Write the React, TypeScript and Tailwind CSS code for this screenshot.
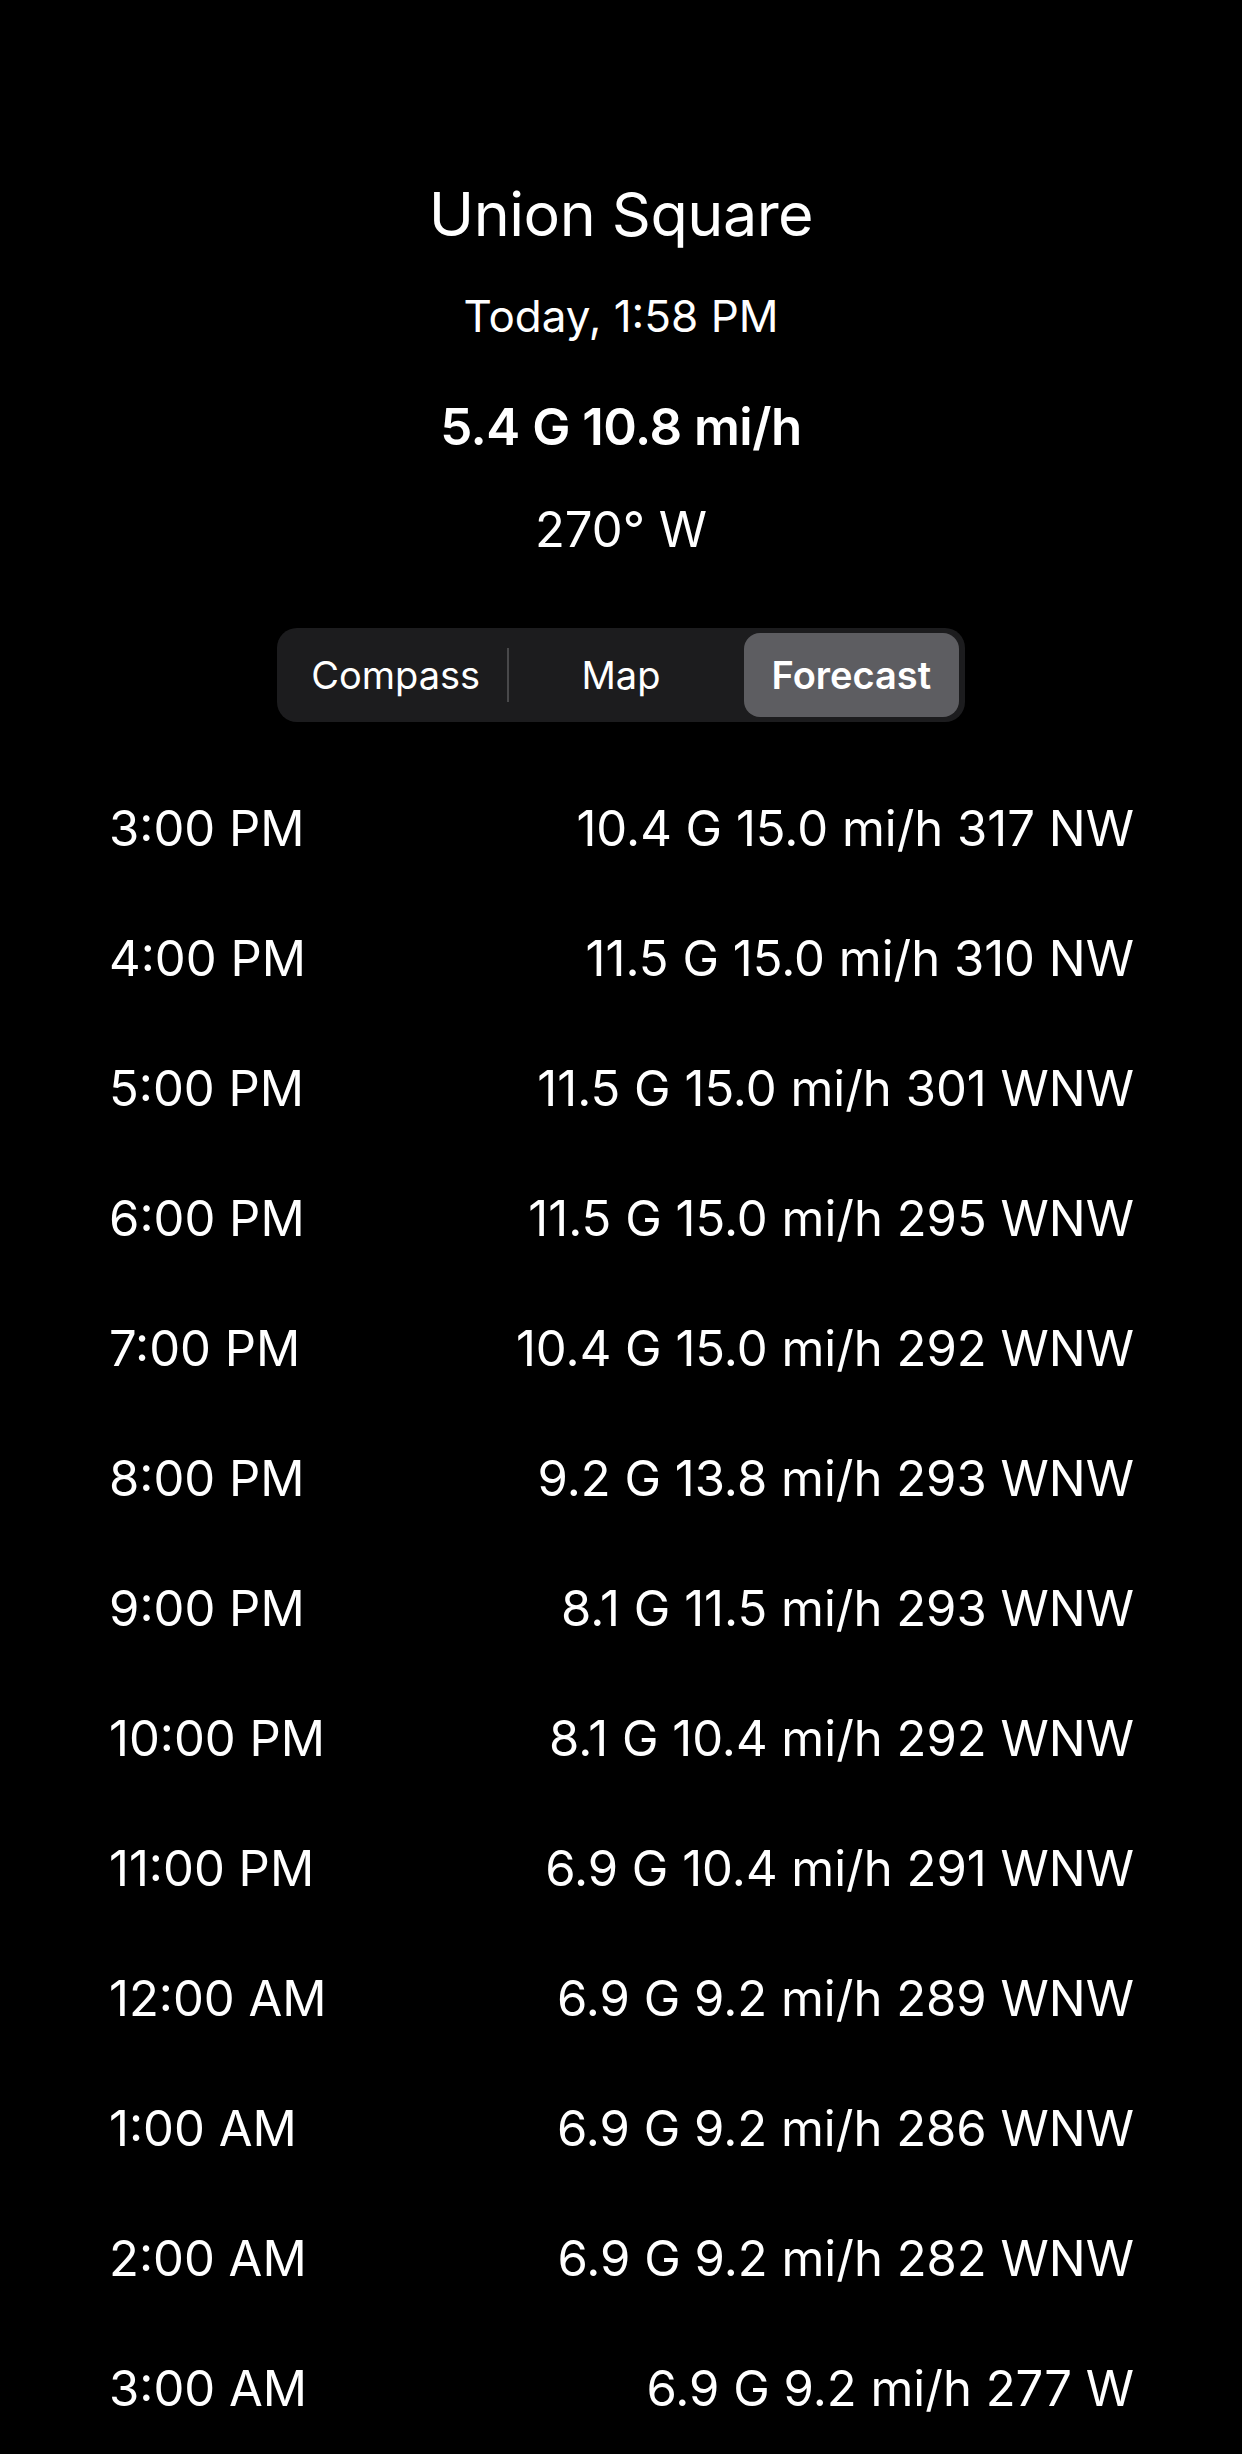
import React from 'react';

const forecast = [
  { time: '3:00 PM', wind: '10.4 G 15.0 mi/h 317 NW' },
  { time: '4:00 PM', wind: '11.5 G 15.0 mi/h 310 NW' },
  { time: '5:00 PM', wind: '11.5 G 15.0 mi/h 301 WNW' },
  { time: '6:00 PM', wind: '11.5 G 15.0 mi/h 295 WNW' },
  { time: '7:00 PM', wind: '10.4 G 15.0 mi/h 292 WNW' },
  { time: '8:00 PM', wind: '9.2 G 13.8 mi/h 293 WNW' },
  { time: '9:00 PM', wind: '8.1 G 11.5 mi/h 293 WNW' },
  { time: '10:00 PM', wind: '8.1 G 10.4 mi/h 292 WNW' },
  { time: '11:00 PM', wind: '6.9 G 10.4 mi/h 291 WNW' },
  { time: '12:00 AM', wind: '6.9 G 9.2 mi/h 289 WNW' },
  { time: '1:00 AM', wind: '6.9 G 9.2 mi/h 286 WNW' },
  { time: '2:00 AM', wind: '6.9 G 9.2 mi/h 282 WNW' },
  { time: '3:00 AM', wind: '6.9 G 9.2 mi/h 277 W' },
];

const tabs = ['Compass', 'Map', 'Forecast'];

export default function App() {
  const active = 'Forecast';

  return (
    <div
      className="w-[1242px] h-[2454px] overflow-hidden bg-black text-white flex flex-col items-center"
      style={{ fontFamily: 'Inter, "Noto Sans", sans-serif' }}
    >
      {/* header */}
      <h1 className="mt-[178px] text-[61px] leading-[72px] font-normal tracking-[-0.5px]">Union Square</h1>
      <p className="mt-[39px] text-[44px] leading-[54px]">Today, 1:58 PM</p>
      <p className="mt-[54px] text-[51px] leading-[60px] font-semibold tracking-[-0.5px]">5.4 G 10.8 mi/h</p>
      <p className="mt-[43px] text-[49px] leading-[60px]">270° W</p>

      {/* segmented control */}
      <div className="mt-[68px] w-[688px] h-[94px] rounded-[20px] bg-[#1c1c1e] px-[6px] py-[5px] flex items-center">
        {tabs.map((tab, i) => {
          const selected = tab === active;
          // divider only between two unselected segments
          const divider = i > 0 && !selected && tabs[i - 1] !== active;
          return (
            <div key={tab} className="relative flex-1 h-full flex items-center">
              {divider && <div className="absolute left-[-1px] w-[2px] h-[54px] bg-[#48484a]" />}
              {selected ? (
                <div className="ml-[10px] w-full h-full rounded-[16px] bg-[#5d5d61] flex items-center justify-center text-[38px] font-semibold">
                  {tab}
                </div>
              ) : (
                <div className="w-full flex items-center justify-center text-[38px]">{tab}</div>
              )}
            </div>
          );
        })}
      </div>

      {/* hourly forecast */}
      <div className="mt-[42px] w-full pl-[109px] pr-[108px] flex flex-col">
        {forecast.map((row) => (
          <div key={row.time} className="h-[130px] flex items-center justify-between text-[49px]">
            <span>{row.time}</span>
            <span>{row.wind}</span>
          </div>
        ))}
      </div>
    </div>
  );
}
